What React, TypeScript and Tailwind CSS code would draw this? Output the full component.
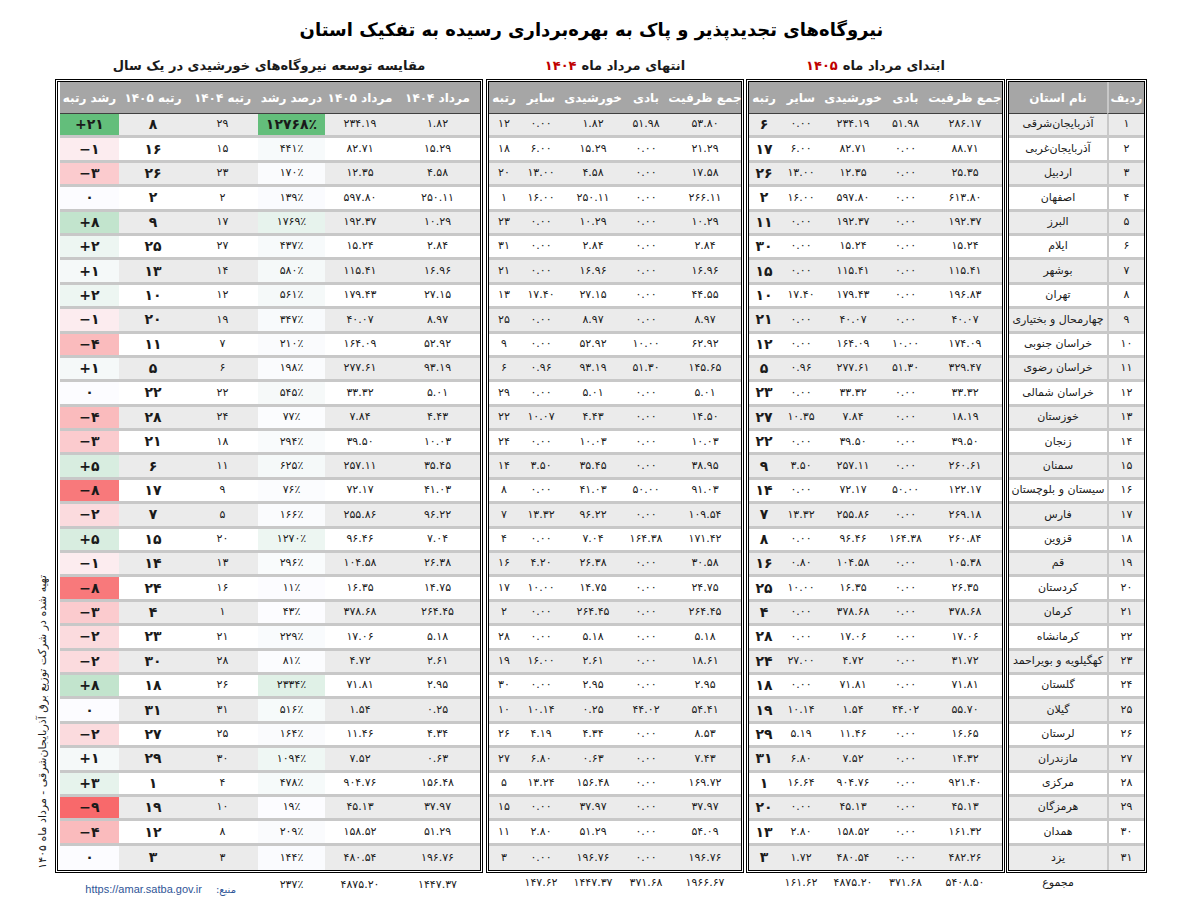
import React from 'react'

type Row = [
  string,
  string, string, string, string, number,
  string, string, string, string, number,
  number, number, number, number,
]

// name | 1405: total, wind, solar, other, rank | 1404: total, wind, solar, other, rank | pct, rank1404, rank1405, delta
const rows: Row[] = [
  ['آذربایجان‌شرقی', '286.17', '51.98', '234.19', '0.00', 6, '53.80', '51.98', '1.82', '0.00', 12, 12768, 29, 8, 21],
  ['آذربایجان‌غربی', '88.71', '0.00', '82.71', '6.00', 17, '21.29', '0.00', '15.29', '6.00', 18, 441, 15, 16, -1],
  ['اردبیل', '25.35', '0.00', '12.35', '13.00', 26, '17.58', '0.00', '4.58', '13.00', 20, 170, 23, 26, -3],
  ['اصفهان', '613.80', '0.00', '597.80', '16.00', 2, '266.11', '0.00', '250.11', '16.00', 1, 139, 2, 2, 0],
  ['البرز', '192.37', '0.00', '192.37', '0.00', 11, '10.29', '0.00', '10.29', '0.00', 23, 1769, 17, 9, 8],
  ['ایلام', '15.24', '0.00', '15.24', '0.00', 30, '2.84', '0.00', '2.84', '0.00', 31, 437, 27, 25, 2],
  ['بوشهر', '115.41', '0.00', '115.41', '0.00', 15, '16.96', '0.00', '16.96', '0.00', 21, 580, 14, 13, 1],
  ['تهران', '196.83', '0.00', '179.43', '17.40', 10, '44.55', '0.00', '27.15', '17.40', 13, 561, 12, 10, 2],
  ['چهارمحال و بختیاری', '40.07', '0.00', '40.07', '0.00', 21, '8.97', '0.00', '8.97', '0.00', 25, 347, 19, 20, -1],
  ['خراسان جنوبی', '174.09', '10.00', '164.09', '0.00', 12, '62.92', '10.00', '52.92', '0.00', 9, 210, 7, 11, -4],
  ['خراسان رضوی', '329.47', '51.30', '277.61', '0.96', 5, '145.65', '51.30', '93.19', '0.96', 6, 198, 6, 5, 1],
  ['خراسان شمالی', '33.32', '0.00', '33.32', '0.00', 23, '5.01', '0.00', '5.01', '0.00', 29, 545, 22, 22, 0],
  ['خوزستان', '18.19', '0.00', '7.84', '10.35', 27, '14.50', '0.00', '4.43', '10.07', 22, 77, 24, 28, -4],
  ['زنجان', '39.50', '0.00', '39.50', '0.00', 22, '10.03', '0.00', '10.03', '0.00', 24, 294, 18, 21, -3],
  ['سمنان', '260.61', '0.00', '257.11', '3.50', 9, '38.95', '0.00', '35.45', '3.50', 14, 625, 11, 6, 5],
  ['سیستان و بلوچستان', '122.17', '50.00', '72.17', '0.00', 14, '91.03', '50.00', '41.03', '0.00', 8, 76, 9, 17, -8],
  ['فارس', '269.18', '0.00', '255.86', '13.32', 7, '109.54', '0.00', '96.22', '13.32', 7, 166, 5, 7, -2],
  ['قزوین', '260.84', '164.38', '96.46', '0.00', 8, '171.42', '164.38', '7.04', '0.00', 4, 1270, 20, 15, 5],
  ['قم', '105.38', '0.00', '104.58', '0.80', 16, '30.58', '0.00', '26.38', '4.20', 16, 296, 13, 14, -1],
  ['کردستان', '26.35', '0.00', '16.35', '10.00', 25, '24.75', '0.00', '14.75', '10.00', 17, 11, 16, 24, -8],
  ['کرمان', '378.68', '0.00', '378.68', '0.00', 4, '264.45', '0.00', '264.45', '0.00', 2, 43, 1, 4, -3],
  ['کرمانشاه', '17.06', '0.00', '17.06', '0.00', 28, '5.18', '0.00', '5.18', '0.00', 28, 229, 21, 23, -2],
  ['کهگیلویه و بویراحمد', '31.72', '0.00', '4.72', '27.00', 24, '18.61', '0.00', '2.61', '16.00', 19, 81, 28, 30, -2],
  ['گلستان', '71.81', '0.00', '71.81', '0.00', 18, '2.95', '0.00', '2.95', '0.00', 30, 2334, 26, 18, 8],
  ['گیلان', '55.70', '44.02', '1.54', '10.14', 19, '54.41', '44.02', '0.25', '10.14', 10, 516, 31, 31, 0],
  ['لرستان', '16.65', '0.00', '11.46', '5.19', 29, '8.53', '0.00', '4.34', '4.19', 26, 164, 25, 27, -2],
  ['مازندران', '14.32', '0.00', '7.52', '6.80', 31, '7.43', '0.00', '0.63', '6.80', 27, 1094, 30, 29, 1],
  ['مرکزی', '921.40', '0.00', '904.76', '16.64', 1, '169.72', '0.00', '156.48', '13.24', 5, 478, 4, 1, 3],
  ['هرمزگان', '45.13', '0.00', '45.13', '0.00', 20, '37.97', '0.00', '37.97', '0.00', 15, 19, 10, 19, -9],
  ['همدان', '161.32', '0.00', '158.52', '2.80', 13, '54.09', '0.00', '51.29', '2.80', 11, 209, 8, 12, -4],
  ['یزد', '482.26', '0.00', '480.54', '1.72', 3, '196.76', '0.00', '196.76', '0.00', 3, 144, 3, 3, 0],
]

const fa = (v: string | number) => String(v).replace(/\d/g, (d) => '۰۱۲۳۴۵۶۷۸۹'[+d])

const WHITE = [252, 252, 255]
const GREEN = [99, 190, 123]
const RED = [248, 105, 107]

function mix(a: number[], b: number[], t: number) {
  const c = a.map((x, k) => Math.round(x + (b[k] - x) * t))
  return `rgb(${c[0]}, ${c[1]}, ${c[2]})`
}

const pctColor = (v: number) => mix(WHITE, GREEN, (v - 11) / (12768 - 11))
const rankColor = (v: number) => (v < 0 ? mix(WHITE, RED, v / -9) : mix(WHITE, GREEN, v / 21))

const signed = (v: number) => (v > 0 ? '+' + fa(v) : v < 0 ? '−' + fa(-v) : fa(0))

const stripe = (i: number) => (i % 2 === 0 ? 'bg-[#ebebeb]' : 'bg-white')

function Cell({
  i,
  className = '',
  style,
  children,
}: {
  i: number
  className?: string
  style?: React.CSSProperties
  children?: React.ReactNode
}) {
  const last = i === rows.length - 1
  return (
    <div
      className={`flex items-center justify-center h-[24.4px] whitespace-nowrap ${last ? '' : 'border-b-[3px] border-[#c8c8c8]'} ${className}`}
      style={style}
    >
      {children}
    </div>
  )
}

function Num({ v }: { v: string | number }) {
  return <span dir="ltr">{fa(v)}</span>
}

function Head({ children, className = '' }: { children: React.ReactNode; className?: string }) {
  return (
    <div
      className={`h-[32px] flex items-center justify-center bg-[#a6a6a6] text-white font-bold text-[12px] tracking-[-0.4px] whitespace-nowrap border-b border-[#404040] ${className}`}
    >
      {children}
    </div>
  )
}

function Subtitle({ children }: { children?: React.ReactNode }) {
  return (
    <div className="h-[33px] pt-[6px] flex items-center justify-center gap-[5px] text-[13px] font-bold whitespace-nowrap">
      {children}
    </div>
  )
}

function CapacityGroup({ year, offset, cols }: { year: string; offset: number; cols: string }) {
  const title = offset === 1 ? 'ابتدای مرداد ماه' : 'انتهای مرداد ماه'
  const totals = offset === 1 ? ['5408.50', '371.68', '4875.20', '161.62'] : ['1966.67', '371.68', '1447.37', '147.62']
  return (
    <div className="flex flex-col">
      <Subtitle>
        <span>{title}</span>
        <span className="text-[#c00000]">{fa(year)}</span>
      </Subtitle>
      <div className="border-[3px] border-double border-black">
        <div className={`grid ${cols}`}>
          <Head>جمع ظرفیت</Head>
          <Head>بادی</Head>
          <Head>خورشیدی</Head>
          <Head>سایر</Head>
          <Head>رتبه</Head>
          {rows.flatMap((r, i) => {
            const b = offset === 1 ? 1 : 6
            return [
              <Cell key={`t${i}`} i={i} className={stripe(i)}><Num v={r[b] as string} /></Cell>,
              <Cell key={`w${i}`} i={i} className={stripe(i)}><Num v={r[b + 1] as string} /></Cell>,
              <Cell key={`s${i}`} i={i} className={stripe(i)}><Num v={r[b + 2] as string} /></Cell>,
              <Cell key={`o${i}`} i={i} className={stripe(i)}><Num v={r[b + 3] as string} /></Cell>,
              <Cell
                key={`r${i}`}
                i={i}
                className={`${stripe(i)} ${offset === 1 ? 'font-bold text-[14px]' : ''}`}
              >
                <Num v={r[b + 4] as number} />
              </Cell>,
            ]
          })}
        </div>
      </div>
      <div className={`grid ${cols} h-[20px] text-[11px] mx-[3px]`}>
        {totals.map((t, k) => (
          <div key={k} className="flex items-center justify-center">
            <Num v={t} />
          </div>
        ))}
        <div />
      </div>
    </div>
  )
}

export default function App() {
  return (
    <div
      dir="rtl"
      className="w-[1183px] h-[917px] bg-white text-[11px] text-[#1a1a1a] font-['DejaVu_Sans',sans-serif] overflow-hidden"
    >
      <h1 className="pt-[17px] h-[46px] text-center text-[18px] leading-[26px] font-bold text-black">
        نیروگاه‌های تجدیدپذیر و پاک به بهره‌برداری رسیده به تفکیک استان
      </h1>

      <div className="flex pr-[36px]">
        {/* province names */}
        <div className="flex flex-col ml-[1px]">
          <Subtitle />
          <div className="border-[3px] border-double border-black">
            <div className="grid grid-cols-[37px_98px]">
              <Head className="border-l-2 border-l-[#c8c8c8]">ردیف</Head>
              <Head>نام استان</Head>
              {rows.flatMap((r, i) => [
                <Cell key={`n${i}`} i={i} className={`${stripe(i)} border-l-2 border-l-[#c8c8c8]`}>
                  <Num v={i + 1} />
                </Cell>,
                <Cell key={`p${i}`} i={i} className={`${stripe(i)} tracking-[-0.3px]`}>
                  {r[0]}
                </Cell>,
              ])}
            </div>
          </div>
          <div className="h-[20px] flex items-center justify-center pr-[37px] text-[11px]">مجموع</div>
        </div>

        <div className="ml-[2px]">
          <CapacityGroup year="1405" offset={1} cols="grid-cols-[74px_45px_60px_44px_30px]" />
        </div>
        <div className="ml-[3px]">
          <CapacityGroup year="1404" offset={6} cols="grid-cols-[72px_46px_60px_44px_30px]" />
        </div>

        {/* comparison */}
        <div className="flex flex-col">
          <Subtitle>مقایسه توسعه نیروگاه‌های خورشیدی در یک سال</Subtitle>
          <div className="border-[3px] border-double border-black">
            <div className="grid grid-cols-[85px_70px_67px_71px_68px_59px]">
              <Head>مرداد ۱۴۰۴</Head>
              <Head>مرداد ۱۴۰۵</Head>
              <Head>درصد رشد</Head>
              <Head>رتبه ۱۴۰۴</Head>
              <Head>رتبه ۱۴۰۵</Head>
              <Head>رشد رتبه</Head>
              {rows.flatMap((r, i) => [
                <Cell key={`a${i}`} i={i} className={stripe(i)}><Num v={r[8]} /></Cell>,
                <Cell key={`b${i}`} i={i} className={stripe(i)}><Num v={r[3]} /></Cell>,
                <Cell key={`c${i}`} i={i} className={r[11] > 10000 ? 'font-bold text-[14px]' : ''} style={{ backgroundColor: pctColor(r[11]) }}>
                  <span dir="ltr">{fa(r[11])}٪</span>
                </Cell>,
                <Cell key={`d${i}`} i={i} className={stripe(i)}><Num v={r[12]} /></Cell>,
                <Cell key={`e${i}`} i={i} className={`${stripe(i)} font-bold text-[14px]`}><Num v={r[13]} /></Cell>,
                <Cell key={`f${i}`} i={i} className="font-bold text-[14px]" style={{ backgroundColor: rankColor(r[14]) }}>
                  <span dir="ltr">{signed(r[14])}</span>
                </Cell>,
              ])}
            </div>
          </div>
          <div className="grid grid-cols-[85px_70px_67px_200px] h-[20px] text-[11px] mx-[3px]">
            <div className="flex items-center justify-center"><Num v="1447.37" /></div>
            <div className="flex items-center justify-center"><Num v="4875.20" /></div>
            <div className="flex items-center justify-center"><span dir="ltr">{fa(237)}٪</span></div>
            <div className="flex items-center gap-[14px] pr-[22px] pt-[8px] text-[#2f5597]">
              <span className="text-[10px]">منبع:</span>
              <span dir="ltr" className="text-[11px] font-['Liberation_Sans',sans-serif]">https://amar.satba.gov.ir</span>
            </div>
          </div>
        </div>

        {/* side note */}
        <div className="w-[57px] flex flex-col justify-end items-start pr-[5px] pb-[24px]">
          <div className="[writing-mode:vertical-rl] rotate-180 text-[11px] leading-[14px] text-[#1a1a1a] whitespace-nowrap">
            تهیه شده در شرکت توزیع برق آذربایجان‌شرقی - مرداد ماه ۱۴۰۵
          </div>
        </div>
      </div>
    </div>
  )
}
